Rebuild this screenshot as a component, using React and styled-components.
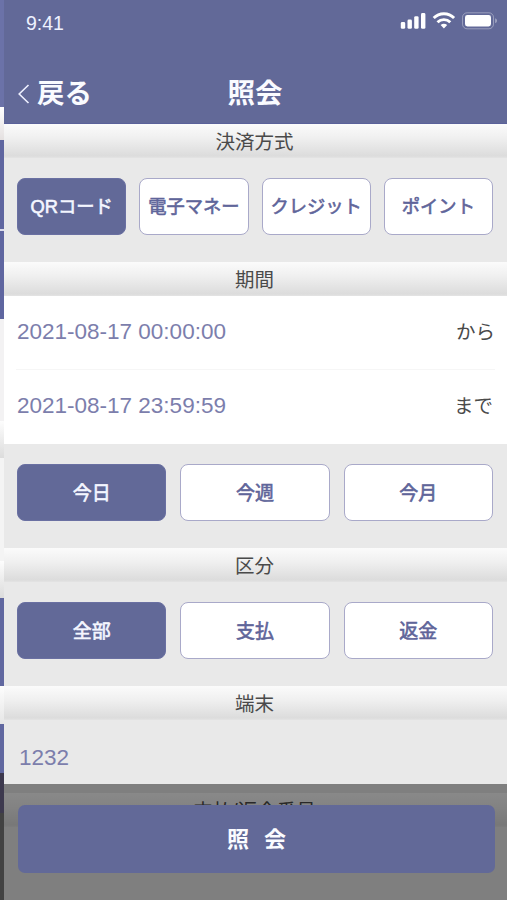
import React, { useState } from 'react'
import styled, { createGlobalStyle, css } from 'styled-components'

const GlobalStyle = createGlobalStyle`
  * { box-sizing: border-box; }

  body {
    margin: 0;
    overflow: hidden;
    background: #e9e9e9;
    font-family: 'Liberation Sans', 'Noto Sans CJK JP', sans-serif;
  }

  button {
    font-family: inherit;
    padding: 0;
    cursor: pointer;
  }
`

const Shell = styled.div`
  display: flex;
  width: 507px;
  height: 900px;
  overflow: hidden;
`

/* edge of the page underneath */
const Edge = styled.div`
  flex: 0 0 4px;
  display: flex;
  flex-direction: column;
`

const EdgeBlock = styled.div`
  flex: 0 0 ${(p) => p.$h}px;
  background: ${(p) => p.$bg};
`

const Screen = styled.main`
  position: relative;
  flex: 1;
  background: #e9e9e9;
`

const Header = styled.header`
  height: 124px;
  background: #626998;
  color: #fafbff;
  border-bottom: 1px solid #5a619a;
`

const StatusBar = styled.div`
  display: flex;
  justify-content: space-between;
  height: 62px;
  padding: 12px 10px 0 22px;
`

const Time = styled.span`
  font-size: 19.5px;
  line-height: 23px;
  color: #eef2ff;
`

const NavBar = styled.div`
  display: grid;
  grid-template-columns: 1fr auto 1fr;
  align-items: center;
  height: 61px;
  padding: 2px 4px 0 13px;
`

const Back = styled.button`
  display: flex;
  align-items: center;
  gap: 7px;
  border: 0;
  background: none;
  color: inherit;
  font-size: 27.5px;
  font-weight: 700;
  line-height: 40px;
`

const Title = styled.h1`
  margin: 0 10px 0 0;
  font-size: 27.5px;
  font-weight: 700;
  line-height: 40px;
`

const Heading = styled.h2`
  height: 34px;
  margin: 0;
  padding: 1px 2px 0 0;
  background: linear-gradient(#fbfbfb, #f0f0f0 40%, #dcdcdc 94%, #e4e4e4);
  color: #4a4a4a;
  font-size: 19.5px;
  font-weight: 400;
  line-height: 34px;
  text-align: center;
`

const Options = styled.div`
  display: grid;
  grid-template-columns: repeat(${(p) => p.$cols}, 1fr);
  gap: ${(p) => (p.$cols === 4 ? 13 : 14)}px;
  height: 104px;
  padding: 20px 14px 0 13px;
  font-size: ${(p) => (p.$cols === 4 ? 18.3 : 19)}px;
`

const Option = styled.button`
  height: 57px;
  padding-bottom: 3px;
  border: 1px solid #a9a9c9;
  border-radius: 8px;
  background: #fff;
  color: #5f659a;
  font-size: inherit;
  font-weight: 400;
  -webkit-text-stroke: 0.6px currentColor;
  white-space: nowrap;

  ${(p) =>
    p.$active &&
    css`
      border-color: #6a70a2;
      background: #626998;
      color: #f4f6ff;
    `}
`

const Period = styled.div`
  height: 148px;
  padding: 0 12px;
  background: #fff;
`

const PeriodRow = styled.div`
  display: flex;
  justify-content: space-between;
  align-items: center;
  height: 74px;
  border-bottom: 1px solid ${(p) => (p.$last ? 'transparent' : '#f6f6f6')};
  padding: 0 ${(p) => (p.$last ? 2 : 0)}px 1px 1px;
`

const Value = styled.span`
  color: #7c7eac;
  font-size: 22.5px;
`

const Suffix = styled.span`
  padding-bottom: 3px;
  color: #4a4a4a;
  font-size: 19.5px;
`

const Terminal = styled.div`
  display: flex;
  align-items: center;
  height: 73px;
  padding: 2px 15px 0;
`

const Footer = styled.footer`
  position: absolute;
  left: 0;
  right: 0;
  bottom: 0;
  height: 116px;
  padding: 21px 12px 0 14px;
  background: rgba(0, 0, 0, 0.455);
`

const Submit = styled.button`
  display: block;
  width: 100%;
  height: 68px;
  padding-bottom: 4px;
  border: 0;
  border-radius: 7px;
  background: #626998;
  color: #fafbff;
  font-size: 22px;
  font-weight: 700;
  word-spacing: 9px;
`

const edge = [
  [107, '#6b72a8'],
  [33, 'linear-gradient(#fff, #e4e0e0)'],
  [89, '#5f66a0'],
  [2, '#dcdcec'],
  [88, '#5f66a0'],
  [102, '#f3f2f3'],
  [37, 'linear-gradient(#fdfdfd, #dcdcdc)'],
  [103, '#f4f4f4'],
  [37, 'linear-gradient(#fdfdfd, #dcdcdc)'],
  [88, '#6168a0'],
  [38, 'linear-gradient(#fdfdfd, #e6e6e6)'],
  [49, '#6168a0'],
  [40, '#3d394e'],
  [87, '#424242'],
]

function StatusIcons() {
  return (
    <svg width="97" height="18" viewBox="0 0 97 18" fill="#fff">
      <rect x="0.800" y="10" width="4.4" height="6.800" rx="1.4" />
      <rect x="7.500" y="7.500" width="4.4" height="9.300" rx="1.4" />
      <rect x="14.200" y="4.200" width="4.400" height="12.600" rx="1.4" />
      <rect x="21" y="1" width="4.400" height="15.800" rx="1.4" />
      <g fill="none" stroke="#fff" strokeWidth="2.9">
        <path d="M33.700 6a14.200 14.200 0 0 1 20.400 0" />
        <path d="M37.500 10.200a9.200 9.200 0 0 1 12.800 0" />
      </g>
      <path d="M43.900 16.400l-3.300-3.300a5 5 0 0 1 6.600 0z" />
      <rect x="62.500" y=".8" width="31" height="16" rx="4.600" fill="none" stroke="#fff" strokeOpacity=".35" />
      <rect x="65" y="3" width="26" height="11.500" rx="2.400" />
      <path d="M95.300 6.200v5c1-.4 1.500-1.300 1.500-2.500s-.5-2.100-1.500-2.500z" opacity=".5" />
    </svg>
  )
}

function OptionGroup({ items }) {
  const [selected, setSelected] = useState(items[0])
  return (
    <Options $cols={items.length}>
      {items.map((item) => (
        <Option key={item} $active={item === selected} onClick={() => setSelected(item)}>
          {item}
        </Option>
      ))}
    </Options>
  )
}

export default function App() {
  return (
    <Shell>
      <GlobalStyle />
      <Edge>
        {edge.map(([h, bg], i) => (
          <EdgeBlock key={i} $h={h} $bg={bg} />
        ))}
      </Edge>
      <Screen>
        <Header>
          <StatusBar>
            <Time>9:41</Time>
            <StatusIcons />
          </StatusBar>
          <NavBar>
            <Back>
              <svg width="13" height="22" viewBox="0 0 13 22" fill="none" stroke="#eef0ff" strokeWidth="1.6">
                <path d="M11.500 2L2.200 11l9.300 9" />
              </svg>
              戻る
            </Back>
            <Title>照会</Title>
          </NavBar>
        </Header>

        <Heading>決済方式</Heading>
        <OptionGroup items={['QRコード', '電子マネー', 'クレジット', 'ポイント']} />

        <Heading>期間</Heading>
        <Period>
          <PeriodRow>
            <Value>2021-08-17 00:00:00</Value>
            <Suffix>から</Suffix>
          </PeriodRow>
          <PeriodRow $last>
            <Value>2021-08-17 23:59:59</Value>
            <Suffix>まで</Suffix>
          </PeriodRow>
        </Period>
        <OptionGroup items={['今日', '今週', '今月']} />

        <Heading>区分</Heading>
        <OptionGroup items={['全部', '支払', '返金']} />

        <Heading>端末</Heading>
        <Terminal>
          <Value>1232</Value>
        </Terminal>
        <Heading>支払/返金番号</Heading>

        <Footer>
          <Submit>照 会</Submit>
        </Footer>
      </Screen>
    </Shell>
  )
}
